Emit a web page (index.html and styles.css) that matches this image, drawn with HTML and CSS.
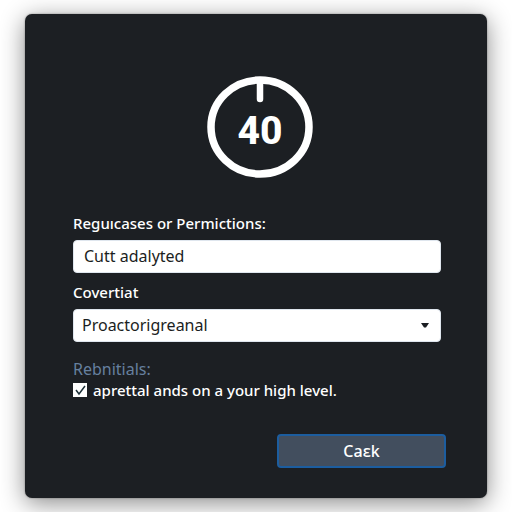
FILE: index.html
```html
<!DOCTYPE html>
<html lang="en">
<head>
<meta charset="utf-8">
<meta name="viewport" content="width=device-width, initial-scale=1">
<title>Permissions</title>
<link rel="stylesheet" href="styles.css">
</head>
<body>
<main class="card">
  <svg class="dial" viewBox="0 0 106 102" role="img" aria-label="40">
    <ellipse cx="53" cy="51" rx="49" ry="47" fill="none" stroke="#fff" stroke-width="7.5"/>
    <path d="M53 6V23" fill="none" stroke="#fff" stroke-width="6.500" stroke-linecap="round"/>
    <text class="dial-value" x="53" y="68" text-anchor="middle">40</text>
  </svg>
  <form class="form">
    <div class="field">
      <label class="label" for="request">Reguıcases or Permictions:</label>
      <input class="control" id="request" type="text" value="Cutt adalyted">
    </div>
    <div class="field">
      <label class="label" for="cover">Covertiat</label>
      <div class="select-wrap">
        <select class="control select" id="cover"><option>Proactorigreanal</option></select>
        <svg class="caret" viewBox="0 0 8 5" aria-hidden="true"><path d="M0 0H8L5 4.500H3Z" fill="#1b1e22"/></svg>
      </div>
    </div>
    <fieldset class="group">
      <legend class="legend">Rebnitials:</legend>
      <label class="check-row"><input class="check" type="checkbox" checked><span>aprettal ands on a your high level.</span></label>
    </fieldset>
    <button class="button" type="button">Caɛk</button>
  </form>
</main>
</body>
</html>
```
FILE: styles.css
```css
* {
  box-sizing: border-box;
}

body {
  margin: 0;
  padding: 14px 25px;
  background: #fff;
  color: #fff;
  font-family: "Noto Sans", "Open Sans", sans-serif;
  font-size: 15px;
  line-height: 20px;
}

.card {
  display: flex;
  flex-direction: column;
  padding: 62px 41px 30px 48px;
  background: #1c1f23;
  border-radius: 7px;
  box-shadow: 0 0 2px #0006, 0 5px 24px #0007;
}

.dial {
  align-self: center;
  width: 106px;
  height: 102px;
}

.dial-value {
  fill: #fff;
  font-family: Roboto, sans-serif;
  font-size: 39px;
  font-weight: 800;
}

.form {
  display: flex;
  flex-direction: column;
  gap: 9px;
  margin-top: 35px;
}

.field,
.group {
  margin-right: 5px;
}

.label {
  display: block;
  margin-bottom: 7px;
  font-weight: 500;
}

.control {
  display: block;
  width: 100%;
  height: 33px;
  padding: 0 10px 1px;
  border: 1px solid #dfe6ee;
  border-radius: 4px;
  background: #fff;
  color: #1b1e22;
  font: inherit;
  font-size: 16px;
}

.select-wrap {
  position: relative;
}

.select {
  padding: 0 8px 1px;
  appearance: none;
}

.caret {
  position: absolute;
  top: 14px;
  right: 12px;
  width: 8px;
  height: 5px;
  pointer-events: none;
}

.group {
  min-width: 0;
  margin-top: 8px;
  margin-left: 0;
  padding: 0;
  border: 0;
}

.legend {
  padding: 0;
  color: #66809f;
  font-size: 16px;
}

.check-row {
  display: flex;
  align-items: center;
  gap: 6px;
  margin-top: 1px;
  font-weight: 500;
}

.check {
  width: 14px;
  height: 14px;
  margin: 0;
  appearance: none;
  background: #fff;
}

.check:checked {
  background: #fff url("data:image/svg+xml,%3Csvg xmlns='http://www.w3.org/2000/svg' viewBox='0 0 14 14'%3E%3Cpath d='M3 7l3 4 6-8' fill='none' stroke='%231d3038' stroke-width='1.5'/%3E%3C/svg%3E");
}

.button {
  align-self: flex-end;
  width: 169px;
  height: 34px;
  margin-top: 25px;
  padding: 0;
  border: 2px solid #1c5d9f;
  border-radius: 4px;
  background: #424e5e;
  color: #fff;
  font: inherit;
  font-size: 16px;
  font-weight: 500;
}
```
